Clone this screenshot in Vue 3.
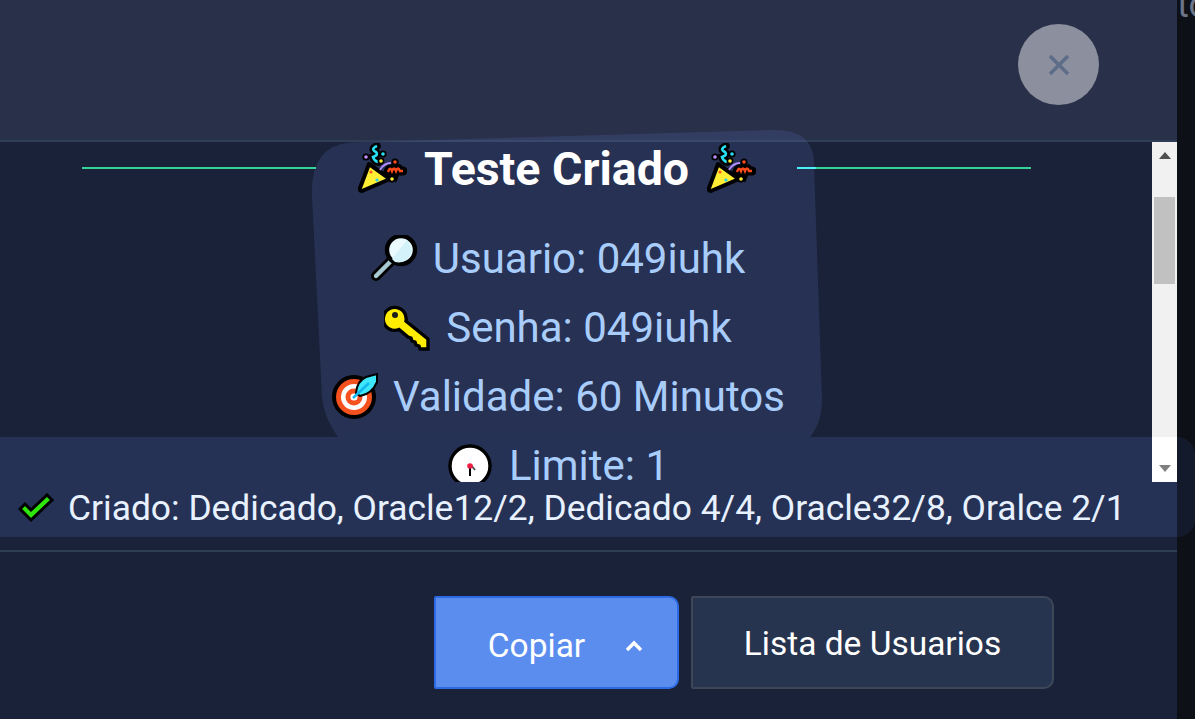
<template>
  <div class="page">
    <div class="modal">
      <header class="modal-head">
        <button class="close" aria-label="Fechar">
          <svg width="22" height="22" viewBox="0 0 22 22">
            <path d="M2 2 L20 20 M20 2 L2 20" stroke="#5d6c88" stroke-width="3.4" fill="none" />
          </svg>
        </button>
      </header>

      <div class="body">
        <div class="content">
          <div class="title-row">
            <span class="line line-left"></span>
            <h2 class="title">
              <svg class="popper" viewBox="0 0 50 50"><use href="#popper" /></svg>
              <span class="title-text">Teste Criado</span>
              <svg class="popper" viewBox="0 0 50 50"><use href="#popper" /></svg>
            </h2>
            <span class="line line-right"></span>
          </div>
          <ul class="info">
            <li v-for="row in rows" :key="row.text">
              <svg class="emoji" viewBox="0 0 48 48" v-html="row.icon"></svg>
              <span>{{ row.text }}</span>
            </li>
          </ul>
        </div>
        <div class="scrollbar">
          <svg class="arrow" width="12" height="7" viewBox="0 0 12 7"><path d="M6 0 L12 7 L0 7 Z" fill="#505050" /></svg>
          <div class="thumb"></div>
          <div class="track-end">
            <svg class="arrow" width="12" height="7" viewBox="0 0 12 7"><path d="M0 0 L12 0 L6 7 Z" fill="#808080" /></svg>
          </div>
        </div>
      </div>

      <div class="status">
        <svg width="36" height="30" viewBox="0 0 36 30">
          <path d="M2 16 L7 11 L13 17 L29 2 L34 7 L13 27 Z" fill="#2ee60e" stroke="#000" stroke-width="3" />
        </svg>
        <span>Criado: Dedicado, Oracle12/2, Dedicado 4/4, Oracle32/8, Oralce 2/1</span>
      </div>

      <footer class="foot">
        <button class="btn primary">
          <span>Copiar</span>
          <svg width="18" height="12" viewBox="0 0 18 12"><path d="M2 10 L9 3 L16 10" stroke="#fff" stroke-width="3.4" fill="none" /></svg>
        </button>
        <button class="btn secondary">Lista de Usuarios</button>
      </footer>
    </div>
    <aside class="side">to</aside>

    <!-- translucent layers of the toast and the tilted card -->
    <div class="band"></div>
    <svg class="blob" width="520" height="312" viewBox="0 0 520 312">
      <path d="M40 14.5 L460 2 Q505 0 504 37 L512 270 Q512 295 500 309 L28 309 Q14 290 12 269 L2 68 Q0 18 40 14.5 Z" fill="rgba(112,140,240,0.15)" />
    </svg>

    <svg width="0" height="0" class="defs">
      <defs>
        <g id="popper">
          <path d="M12 21 L33 36 L5 48 Q2 48 3 45 Z" fill="#ffee33" stroke="#000" stroke-width="4" stroke-linejoin="round" />
          <circle cx="14" cy="29" r="1.6" fill="#ff5a1f" />
          <circle cx="20" cy="37" r="1.6" fill="#1fd0f0" />
          <path d="M20 3 Q13 6 19 9 Q22 12 16 14 Q17 18 21 19" stroke="#000" stroke-width="7.5" fill="none" stroke-linecap="round" />
          <path d="M20 3 Q13 6 19 9 Q22 12 16 14 Q17 18 21 19" stroke="#26e0f5" stroke-width="2.6" fill="none" />
          <path d="M23 27 Q27 20 34 20" stroke="#b48cff" stroke-width="1.8" fill="none" />
          <path d="M31 29 Q33 23 35 28 Q37 23 39 28 Q41 23 43 28 L46 28" stroke="#000" stroke-width="9" fill="none" stroke-linecap="round" />
          <path d="M31 29 Q33 23 35 28 Q37 23 39 28 Q41 23 43 28 L46 28" stroke="#ff4a1c" stroke-width="2.4" fill="none" />
          <circle cx="9" cy="14" r="3.6" fill="#000" /><circle cx="9" cy="14" r="1.8" fill="#c08cff" />
          <circle cx="26" cy="11" r="3.6" fill="#000" /><circle cx="26" cy="11" r="1.8" fill="#26e0f5" />
          <circle cx="24" cy="18" r="3.4" fill="#000" /><circle cx="24" cy="18" r="1.8" fill="#ffee33" />
          <circle cx="38" cy="19" r="3.6" fill="#000" /><circle cx="38" cy="19" r="1.8" fill="#ff4a1c" />
          <circle cx="35" cy="36" r="3.6" fill="#000" /><circle cx="35" cy="36" r="1.8" fill="#ffee33" />
        </g>
      </defs>
    </svg>
  </div>
</template>

<script setup>
const lens = `
  <path d="M5 41 L20 26" stroke="#000" stroke-width="10" stroke-linecap="round" />
  <path d="M5 41 L20 26" stroke="#a9c8d2" stroke-width="4.4" stroke-linecap="round" />
  <circle cx="30" cy="15" r="14" fill="#eafaff" stroke="#000" stroke-width="4.4" />
  <path d="M21 24 L36 5 Q43 13 39 21 Q34 29 24 27 Z" fill="#d4f2fa" />`

const key = `
  <path d="M15 25.5 A11.5 11.5 0 1 1 22 17 L44 35 L44 45 L36 45 L35 42 L32 41 L31 38 L28 37 L27 34 L24 33 Z" fill="#ffec00" stroke="#000" stroke-width="3.4" />
  <circle cx="11" cy="11" r="3" fill="#1a1a1a" />`

const target = `
  <circle cx="23" cy="24" r="20" fill="#f4511e" stroke="#000" stroke-width="4" />
  <circle cx="23" cy="24" r="13" fill="#fff" />
  <circle cx="23" cy="24" r="8.5" fill="#f4511e" />
  <circle cx="23" cy="24" r="3.6" fill="#fff" />
  <path d="M25 20 Q26 8 35 4 L46 1 L46 9 Q41 21 29 23 Z" fill="#3fe7fb" stroke="#000" stroke-width="2" />
  <path d="M22 25 L38 10" stroke="#12b8ee" stroke-width="2.6" />`

const clock = `
  <circle cx="23" cy="24" r="20" fill="#fff" stroke="#000" stroke-width="3.4" />
  <path d="M23 24 L23 34" stroke="#000" stroke-width="2" />
  <path d="M24 23 L28 28" stroke="#555" stroke-width="2" />
  <circle cx="23" cy="24" r="2.8" fill="#f01e46" />`

const rows = [
  { text: 'Usuario: 049iuhk', icon: lens },
  { text: 'Senha: 049iuhk', icon: key },
  { text: 'Validade: 60 Minutos', icon: target },
  { text: 'Limite: 1', icon: clock }
]
</script>

<style>
html, body {
  margin: 0;
  background: #0d1017;
  overflow: hidden;
}
</style>

<style scoped>
.page {
  position: relative;
  width: 1195px;
  height: 719px;
  overflow: hidden;
  display: flex;
  font-family: "Roboto", "Liberation Sans", sans-serif;
  background: #0d1017;
}

.modal {
  width: 1177px;
  height: 719px;
  flex: none;
  display: flex;
  flex-direction: column;
  background: #1a2239;
}

.modal-head {
  height: 116px;
  flex: none;
  background: #293049;
  border-bottom: 2px solid #2f3d55;
  display: flex;
  justify-content: flex-end;
  align-items: flex-start;
  padding: 24px 78px 0 0;
}

.close {
  width: 81px;
  height: 81px;
  border: 0;
  padding: 0;
  border-radius: 50%;
  background: #8b8f9e;
  display: flex;
  align-items: center;
  justify-content: center;
  position: relative;
  z-index: 3;
}

.body {
  height: 340px;
  flex: none;
  display: flex;
  position: relative;
  z-index: 2;
}

.content {
  flex: 1;
  overflow: hidden;
  padding-right: 36px;
  box-sizing: border-box;
}

.title-row {
  display: flex;
  align-items: center;
  height: 52px;
  padding-left: 82px;
  padding-right: 85px;
}

.line {
  flex: 1;
  height: 2px;
}

.line-left {
  background: #34d399;
}

.line-right {
  background: linear-gradient(90deg, #4ef0f5 19px, #34d399 19px);
}

.title {
  margin: 0;
  padding: 0 41px;
  display: flex;
  align-items: center;
  gap: 17px;
  font-size: 46.5px;
  font-weight: 700;
  color: #fff;
  white-space: nowrap;
}

.title-text {
  padding-top: 2px;
}

.popper {
  width: 50px;
  height: 50px;
}

.info {
  list-style: none;
  margin: 0;
  padding: 30px 0 0;
  display: flex;
  flex-direction: column;
  align-items: center;
  color: #a9cdfb;
  font-size: 42px;
}

.info li {
  height: 69px;
  display: flex;
  align-items: center;
  gap: 14px;
}

.emoji {
  width: 48px;
  height: 48px;
  flex: none;
}

.scrollbar {
  width: 25px;
  flex: none;
  background: #f1f1f1;
  display: flex;
  flex-direction: column;
  align-items: center;
}

.scrollbar > .arrow {
  margin-top: 10px;
}

.thumb {
  width: 21px;
  height: 87px;
  margin-top: 38px;
  background: #c1c1c1;
}

.track-end {
  margin-top: auto;
  width: 100%;
  height: 45px;
  background: #fff;
  display: flex;
  align-items: flex-end;
  justify-content: center;
  padding-bottom: 10px;
  box-sizing: border-box;
}

.status {
  height: 55px;
  flex: none;
  display: flex;
  align-items: center;
  gap: 14px;
  padding: 0 0 3px 18px;
  color: #e8f1ff;
  font-size: 35.4px;
  position: relative;
  z-index: 2;
  box-sizing: border-box;
  white-space: nowrap;
}

.foot {
  margin-top: 13px;
  border-top: 2px solid #2f3d55;
  padding: 44px 123px 0 434px;
  display: flex;
  gap: 12px;
}

.btn {
  height: 93px;
  font: inherit;
  font-size: 33.5px;
  color: #fff;
  border-radius: 2px 10px 10px 2px;
  box-sizing: border-box;
  display: flex;
  align-items: center;
  justify-content: center;
}

.primary {
  width: 245px;
  gap: 40px;
  background: #5b8def;
  border: 2px solid #2d6be4;
  padding: 6px 0 0 18px;
}

.secondary {
  flex: 1;
  background: #27344f;
  border: 2px solid #3d4757;
  padding-top: 3px;
}

.side {
  flex: 1;
  color: #6b7488;
  font-size: 36px;
  white-space: nowrap;
  overflow: hidden;
  margin-top: -16px;
  line-height: 42px;
}

.band {
  position: absolute;
  left: 0;
  right: 0;
  top: 437px;
  height: 100px;
  border-radius: 0 18px 18px 0;
  background: linear-gradient(90deg, #253155 1177px, #131a2b 1177px);
  z-index: 1;
}

.blob {
  position: absolute;
  left: 310px;
  top: 128px;
  z-index: 1;
  pointer-events: none;
}

.defs {
  position: absolute;
}
</style>
